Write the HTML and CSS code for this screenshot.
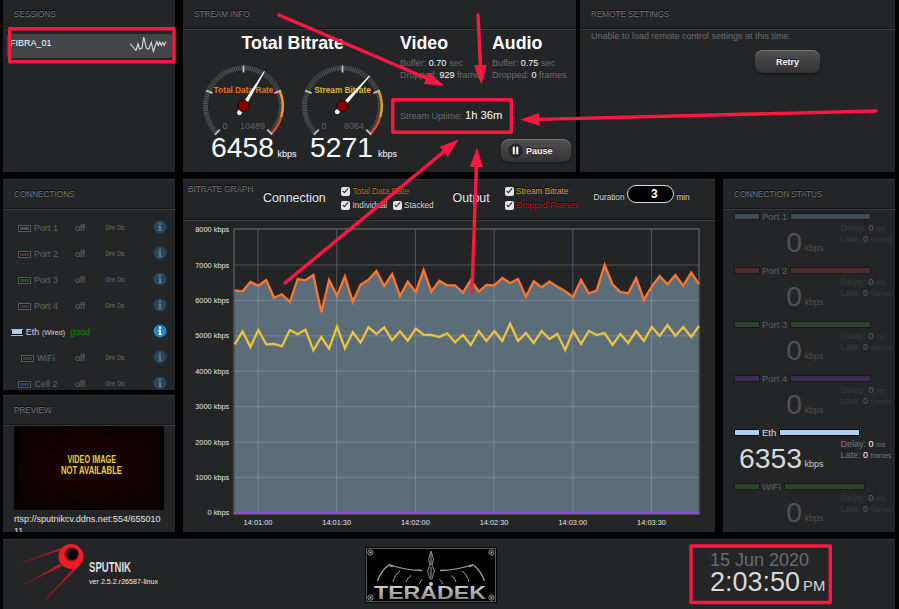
FILE: index.html
```
<!DOCTYPE html>
<html lang="en">
<head>
<meta charset="utf-8">
<title>Sputnik</title>
<link rel="stylesheet" href="styles.css">
</head>
<body>
<div class="app">
  <section class="panel sessions">
    <h3>SESSIONS</h3>
    <div class="session"><span>FIBRA_01</span>
      <svg width="40" height="18" viewBox="129 36 40 18"><path d="M130 43.500l6 7 2-6.500 1.500 5 2.500-1 1.800-11 2.500 11 2.500 1 2.500-6.500 2 9 3.500-10 1.500 4 1.500-3.500 1.500 3.500 1.500-3 1.500 3 1.500-4" fill="none" stroke="#dcdddd" stroke-width="1.100"/><circle cx="166.400" cy="44.500" r="1.200" fill="#f00"/></svg>
    </div>
  </section>

  <section class="panel stream">
    <h3>STREAM INFO</h3>
    <div class="stream-body">
      <div class="bitrate">
        <h2>Total Bitrate</h2>
        <div class="gauges">
          <div class="gauge" id="g1">
            <svg width="99" height="79" viewBox="-49.5 -52 99 79">
              <g class="dial"></g>
              <text class="gname orange" x="0" y="-13">Total Data Rate</text>
              <text class="gnum" x="-18.500" y="23">0</text><text class="gnum" x="9" y="23">10489</text>
              <g transform="rotate(31.2)"><path class="needle" d="M-.5-40.500H.5L2.300 9 0 10.500-2.300 9z"/></g>
              <circle r="5.700" class="hub"/>
            </svg>
            <p class="big">6458<small>kbps</small></p>
          </div>
          <div class="gauge" id="g2">
            <svg width="99" height="79" viewBox="-49.5 -52 99 79">
              <g class="dial"></g>
              <text class="gname gold" x="0" y="-13">Stream Bitrate</text>
              <text class="gnum" x="-18.500" y="23">0</text><text class="gnum" x="11.500" y="23">8064</text>
              <g transform="rotate(42)"><path class="needle" d="M-.5-40.500H.5L2.300 9 0 10.500-2.300 9z"/></g>
              <circle r="5.700" class="hub"/>
            </svg>
            <p class="big second">5271<small>kbps</small></p>
          </div>
        </div>
      </div>
      <div class="av">
        <div class="av-cols">
          <div><h2>Video</h2><p>Buffer: <b>0.70</b> sec</p><p>Dropped: <b>929</b> frames</p></div>
          <div><h2>Audio</h2><p>Buffer: <b>0.75</b> sec</p><p>Dropped: <b>0</b> frames</p></div>
        </div>
        <p class="uptime">Stream Uptime: <b>1h 36m</b></p>
        <button class="btn pause"><svg width="15" height="15"><circle cx="7.500" cy="7.500" r="6.500" fill="#292a2b" stroke="#191919"/><path d="M4.800 3.800h2v7.400h-2zM8.200 3.800h2v7.400h-2z" fill="#fff"/></svg>Pause</button>
      </div>
    </div>
  </section>

  <section class="panel remote">
    <h3>REMOTE SETTINGS</h3>
    <p>Unable to load remote control settings at this time.</p>
    <button class="btn retry">Retry</button>
  </section>

  <section class="panel connections">
    <h3>CONNECTIONS</h3>
    <div class="rows" id="rows"></div>
  </section>

  <section class="panel preview">
    <h3>PREVIEW</h3>
    <svg class="video" width="150" height="84"><defs><radialGradient id="vg"><stop offset="0" stop-color="#210202"/><stop offset="1" stop-color="#0c0001"/></radialGradient></defs>
      <rect width="150" height="84" fill="#050000"/><rect x="4" width="142" height="83" fill="url(#vg)"/>
      <g font-family="Liberation Sans" font-weight="bold" font-size="10.500" fill="#e3d341"><text x="53.500" y="37.300" textLength="48.500" lengthAdjust="spacingAndGlyphs">VIDEO IMAGE</text><text x="47" y="47.800" textLength="61" lengthAdjust="spacingAndGlyphs">NOT AVAILABLE</text></g>
    </svg>
    <p>rtsp://sputnikcv.ddns.net:554/65501011</p>
  </section>

  <section class="panel graph">
    <header>
      <span class="gtitle">BITRATE GRAPH</span>
      <span class="group">Connection</span>
      <div class="checks conn"><div><label class="orange2"><i></i>Total Data Rate</label></div><div><label><i></i>Individual</label><label><i></i>Stacked</label></div></div>
      <span class="group out">Output</span>
      <div class="checks outp"><div><label class="gold"><i></i>Stream Bitrate</label></div><div><label class="red"><i></i>Dropped Frames</label></div></div>
      <div class="duration">Duration<span class="input">3</span>min</div>
    </header>
    <svg id="chart" width="532" height="311" viewBox="183 221 532 311"></svg>
  </section>

  <section class="panel status">
    <h3>CONNECTION STATUS</h3>
    <div id="status"></div>
  </section>

  <footer class="panel foot">
    <div class="brand">
      <svg width="66" height="66" viewBox="20 541 66 66">
        <defs><linearGradient id="ray" x1="0" y1="1" x2="1" y2="0"><stop offset="0" stop-color="#c01520" stop-opacity=".2"/><stop offset="1" stop-color="#e01b26"/></linearGradient></defs>
        <path d="M64 547L21 563 66 548.500z" stroke="#c01520" stroke-width=".3" fill="url(#ray)"/><path d="M60 564L25 584 62 566z" stroke="#c01520" stroke-width=".3" fill="url(#ray)"/><path d="M78 567L46 599 75 567z" stroke="#c01520" stroke-width=".6" fill="url(#ray)"/>
        <circle cx="71" cy="556.500" r="12.500" fill="#ee1c27"/><circle cx="71.500" cy="554.500" r="7.300" fill="#a8101a"/><circle cx="72.300" cy="554" r="6" fill="#050505"/><circle cx="69" cy="551.500" r="1" fill="#77262b"/>
      </svg>
      <div><svg class="word" width="44" height="14"><text x="0" y="12" textLength="42" lengthAdjust="spacingAndGlyphs">SPUTNIK</text></svg><p>ver 2.5.2.r26587-linux</p></div>
    </div>
    <svg class="teradek" width="132" height="56" viewBox="365 547 132 56">
      <defs><linearGradient id="metal" x1="0" y1="0" x2="0" y2="1"><stop offset="0" stop-color="#ddd"/><stop offset="1" stop-color="#777"/></linearGradient></defs>
      <rect x="365" y="547" width="132" height="56" fill="#050505"/><rect x="366.500" y="548.500" width="129" height="53" fill="#000" stroke="#5c5c5c"/>
      <g fill="#222" stroke="#8b8b8b" stroke-width=".9"><circle cx="370.500" cy="552.500" r="2.700"/><circle cx="491.500" cy="552.500" r="2.700"/><circle cx="370.500" cy="597.500" r="2.700"/><circle cx="491.500" cy="597.500" r="2.700"/></g>
      <g fill="#bbb"><circle cx="370.500" cy="552.500" r="1"/><circle cx="491.500" cy="552.500" r="1"/><circle cx="370.500" cy="597.500" r="1"/><circle cx="491.500" cy="597.500" r="1"/></g>
      <g id="wing" fill="none" stroke="#a4a4a4" stroke-width="1.300"><path d="M377.500 581Q381 571 388 565.500M388.500 564.500Q404 570 422 570.500" /><path d="M393 582Q395 574 400 571M406 582Q407 578 411 575.500M419.500 584Q420 581 422.500 579.500" stroke-width="1"/><path d="M388.500 565L393 566.300" stroke-width="1.800"/></g>
      <use href="#wing" transform="matrix(-1 0 0 1 862 0)"/>
      <path d="M431 551l2.500 8-1.500 6 2.500 6-2.500 8h-2l-2.500-8 2.500-6-1.500-6zM431 553v12M431 567v11" fill="#111" stroke="#999" stroke-width=".9"/>
      <text x="374" y="599" font-family="Liberation Sans" font-weight="bold" font-size="18" fill="url(#metal)" textLength="112" lengthAdjust="spacingAndGlyphs">TERADEK</text>
      <circle cx="431" cy="584" r="2" fill="#ccc"/>
    </svg>
    <div class="clock"><p class="date">15 Jun 2020</p><p class="time">2:03:50<small>PM</small></p></div>
  </footer>
</div>

<svg class="marks" width="899" height="609">
  <defs><marker id="head" markerUnits="userSpaceOnUse" markerWidth="20" markerHeight="14" refX="1" refY="6.500" orient="auto"><path d="M0 0L19.500 6.500 0 13z" fill="#ff1744"/></marker></defs>
  <g fill="none" stroke="#ff1744" stroke-width="3.400" stroke-linecap="round">
    <rect x="9.700" y="28.700" width="164.300" height="33" stroke-linejoin="round"/>
    <rect x="392.800" y="99.800" width="118.500" height="32.400" stroke-linejoin="round"/>
    <rect x="691" y="546" width="139.300" height="56.500" stroke-linejoin="round"/>
    <path d="M279 15L427.200 78.500" marker-end="url(#head)"/>
    <path d="M478 15L480.500 66" marker-end="url(#head)"/>
    <path d="M876 111L538.500 119.400" marker-end="url(#head)"/>
    <path d="M285 283L444.400 151.300" marker-end="url(#head)"/>
    <path d="M472 292L476.400 166" marker-end="url(#head)"/>
  </g>
</svg>
<script src="app.js"></script>
</body>
</html>
```

FILE: styles.css
```
* { box-sizing: border-box; margin: 0; padding: 0; }
body { background: #020202; color: #ddd; font-family: "Liberation Sans", Arial, sans-serif; font-size: 9px; width: 899px; height: 609px; overflow: hidden; position: relative; }
.app { display: grid; padding-left: 3px; width: 899px; height: 609px;
  grid-template-columns: 172px 8px 393px 4px 135px 4px 4px 172px;
  grid-template-rows: 172px 7px 211px 5px 136px 8px 70px; }
.panel { background: #242527; overflow: hidden; border-top: 1px solid #323335; min-width: 0; }
.sessions { grid-area: 1 / 1; border-top: 0; }
.stream { grid-area: 1 / 3; border-top: 0; }
.remote { grid-area: 1 / 5 / 2 / 9; border-top: 0; }
.connections { grid-area: 3 / 1; }
.preview { grid-area: 5 / 1 / 6 / 2; height: 137px; }
.graph { grid-area: 3 / 3 / 6 / 6; height: 353px; }
.status { grid-area: 3 / 8 / 6 / 9; height: 353px; }
.foot { grid-area: 7 / 1 / 8 / 9; }

h3 { font-size: 8.2px; font-weight: normal; color: #77797b; height: 30px; line-height: 30px; padding-left: 11px; border-bottom: 1px solid #3a3b3d; box-shadow: inset 0 -1px #141516; text-shadow: 0 -1px #000; white-space: nowrap; }
.sessions h3, .stream h3, .remote h3 { line-height: 29px; }
h2 { font-size: 17.800px; line-height: 22px; color: #fff; }
p { white-space: nowrap; }

.session { display: flex; justify-content: space-between; margin: 4px 3px 0 4px; height: 24px; border-radius: 3px; background: #434648; color: #fff; line-height: 19px; padding-left: 3px; }
.session svg { margin: 2px 3px 0 0; }

.stream-body { display: flex; padding-top: 2px; }
.bitrate { width: 217px; padding-left: 10.500px; }
.bitrate h2 { padding-left: 48px; }
.gauges { display: flex; }
.gauge { width: 99px; }
.gauge svg { display: block; overflow: visible; }
.gname { font-size: 8.300px; font-weight: bold; text-anchor: middle; }
.gnum { font-size: 9px; fill: #626466; text-anchor: middle; }
.needle { fill: #fff; }
.hub { fill: #800000; stroke: #2a0000; }
.big { font-size: 28.300px; line-height: 29px; color: #fff; padding-left: 17.500px; }
.big small { font-size: 9px; margin-left: 3.500px; }
.big.second small { margin-left: 5px; }
.av { color: #6a6c6e; }
.av-cols { display: grid; grid-template-columns: 92px 80px; }
.av h2 { margin-bottom: 3px; }
.av p { line-height: 12px; }
.av b { color: #fff; font-weight: normal; }
.av .uptime { line-height: 20px; margin-top: 24px; }
.uptime b { font-size: 11.200px; }
.btn { font: bold 9px "Liberation Sans", sans-serif; color: #fff; text-shadow: 0 -1px #000; border: 0; border-radius: 8px; background: linear-gradient(#515151, #333); box-shadow: inset 0 1px #777, 0 1px 2px #111; display: flex; align-items: center; justify-content: center; height: 23px; }
.pause { width: 70px; margin: 13px 0 0 101px; gap: 3px; justify-content: flex-end; padding-right: 18.500px; }
.remote p { padding-left: 11px; line-height: 12px; color: #6a6c6e; }
.retry { width: 65px; margin: 8px 0 0 175px; }

.rows { padding-top: 5px; }
.row { display: grid; grid-template-columns: 60px 24px 46px 1fr; height: 26px; align-items: center; padding-left: 5px; text-align: center; white-space: nowrap; }
.row > * { opacity: .36; }
.row.on > * { opacity: 1; }
.row .name { display: flex; justify-content: center; align-items: center; gap: 3px; color: #d5d5d5; }
.row .name small { font-size: 7.100px; }
.row .chip { width: 13px; height: 7px; border: 1px solid #bbb; background: #000; padding: 1px; }
.row .chip i { display: block; height: 3px; background: var(--c); }
.row.on .chip { border-width: 1px 0; width: 12px; padding: 0 1px; }
.row.on .chip i { height: 4px; margin-top: .5px; }
.row .time { font-size: 7.100px; }
.row.on .state { color: #0a8a0a; margin: 0 -5px; }
.row svg { margin-left: 15px; margin-top: -2px; }

.video { display: block; margin: 0 0 0 11px; }
.preview p { white-space: normal; word-break: break-all; width: 150px; margin: 3px 0 0 11px; line-height: 12px; color: #e4e4e4; }

.graph header { display: flex; height: 41px; border-bottom: 1px solid #3a3b3d; box-shadow: inset 0 -1px #141516; text-shadow: 0 -1px #000; font-size: 8.200px; white-space: nowrap; }
.gtitle { color: #77797b; width: 75px; padding-left: 5px; line-height: 19px; }
.group { font-size: 12.400px; line-height: 36px; color: #eee; padding-left: 5px; width: 83px; }
.group.out { width: 52px; padding-left: 0; }
.checks { padding-top: 4px; }
.checks div { display: flex; height: 14px; align-items: center; gap: 5.500px; }
.conn { width: 111.500px; }
.outp { width: 89px; }
.checks label { display: flex; align-items: center; gap: 2.500px; }
.checks i { width: 9px; height: 9px; background: #e4e4e4; border-radius: 2px; position: relative; }
.checks i::after { content: ""; position: absolute; left: 3px; top: .5px; width: 2px; height: 4.500px; border: solid #222; border-width: 0 1.500px 1.500px 0; transform: rotate(42deg); box-sizing: content-box; }
.orange { fill: #ef6a30; } .orange2 { color: #dd6026; }
.gold { fill: #dcb63e; color: #d2ab35; } .red { color: #d00; }
.duration { display: flex; align-items: flex-start; line-height: 35px; gap: 2px; }
.input { width: 47px; height: 18px; margin: 5px 0 0 1px; border: 1px solid #ddd; border-radius: 9px; background: #000; color: #fff; font-weight: bold; font-size: 12px; line-height: 16px; text-align: center; padding-left: 7px; }
#chart { display: block; }
#chart text { font-size: 7.400px; fill: #e4e4e4; }

.link { height: 54px; padding-left: 11px; }
.link > * { opacity: .25; }
.link > .bars { opacity: .31; }
.link.on > * { opacity: 1; }
.bars { display: flex; align-items: center; line-height: 13px; height: 13px; font-size: 9.500px; gap: 2px; color: #ddd; }
.bars i { height: 7px; border: 1px solid #000; background: var(--c); width: 26px; }
.bars i:last-child { width: 81px; margin-left: 1px; }
.meter { display: flex; height: 41px; }
.meter .rate { width: 68px; font-size: 28.300px; line-height: 39px; text-align: right; color: #d8d8d8; }
.meter .unit { width: 38.500px; padding: 17px 0 0 2.500px; line-height: 16px; color: #ccc; }
.meter .info { line-height: 11px; color: #77797b; white-space: nowrap; }
.info b { font-weight: normal; color: #fff; }
.info small { font-size: 6.800px; }

.foot { display: flex; }
.brand { display: flex; width: 363px; padding-left: 17px; font-size: 7.150px; }
.brand > div { padding: 20px 0 0 3px; color: #eee; }
.brand svg { margin-top: 1px; }
.brand .word { display: block; margin: 0; overflow: visible; }
.word text { font-size: 15px; font-weight: bold; fill: #ddd; }
.brand p { line-height: 12px; margin-top: 2px; }
.teradek { margin: 7px 0 0 -1px; }
.clock { margin-left: 213px; white-space: nowrap; }
.date { font-size: 18px; line-height: 20px; color: #6a6c6e; margin-top: 10px; }
.clock .time { font-size: 27px; line-height: 26px; color: #d8d8d8; margin-top: -1px; }
.clock small { font-size: 14.800px; margin-left: 3px; }
.marks { position: absolute; left: 0; top: 0; }
```

FILE: app.js
```
// Gauge dials: fine ticks, five major ticks and the warning ranges
const pt = (r, deg) => { const a = deg * Math.PI / 180; return (r * Math.sin(a)).toFixed(2) + ' ' + (-r * Math.cos(a)).toFixed(2); };
let dial = '', fine = '';
for (let i = 0; i <= 100; i++) { const a = -135 + i * 2.7; fine += `M${pt(35.5, a)}L${pt(40.5, a)}`; }
dial += `<path d="${fine}" stroke="#66686a" stroke-width=".8"/>`;
dial += `<path d="M${pt(39.3, 67.5)}A39.300 39.300 0 0 1 ${pt(39.3, 107)}" fill="none" stroke="#f29a18" stroke-width="2.400"/>`;
dial += `<path d="M${pt(39.3, 107)}A39.300 39.300 0 0 1 ${pt(39.3, 135)}" fill="none" stroke="#dc4a25" stroke-width="2.400"/>`;
for (let i = 0; i < 5; i++) { const a = -135 + i * 67.5; dial += `<path d="M${pt(33.5, a)}L${pt(40.5, a)}" stroke="#c4c6c8" stroke-width="1.800"/>`; }
document.querySelectorAll('.dial').forEach(g => g.innerHTML = dial);

const conns = [['Port 1', '#7fa4b8'], ['Port 2', '#a84040'], ['Port 3', '#3f8a3f'], ['Port 4', '#7540b8'], ['Eth', '#a9d3f5'], ['WiFi', '#3f8a3f'], ['Cell 2', '#3a6cd0']];
document.getElementById('rows').innerHTML = conns.map(([n, c]) => {
  const on = n === 'Eth';
  return `<div class="row${on ? ' on' : ''}" style="--c:${c}"><span class="name"><span class="chip"><i></i></span><span>${n}${on ? ' <small>(Wired)</small>' : ''}</span></span><span class="state">${on ? 'good' : 'off'}</span><span class="time">${on ? '' : '0m 0s'}</span><svg width="14" height="14"><circle cx="7" cy="7" r="6.500" fill="#2487c4"/><path d="M6 2.700h2v2H6zM5 5.700h3v4.300h1v1H5.200v-1H6V6.700H5z" fill="#fff"/></svg></div>`;
}).join('');

document.getElementById('status').innerHTML = conns.slice(0, 6).map(([n, c]) => {
  const on = n === 'Eth';
  return `<div class="link${on ? ' on' : ''}" style="--c:${c}"><div class="bars"><i></i><span>${n}</span><i></i></div><div class="meter"><span class="rate">${on ? 6353 : 0}</span><span class="unit">kbps</span><div class="info">Delay: <b>0</b> <small>ms</small><br>Late: <b>0</b> <small>frames</small></div></div></div>`;
}).join('');

// Bitrate chart
const totalA = [121,124,96,107,90,143,133,156,87,91,75,187,90,137,79,155,104,89,63,108,72,138,95,127,60,125].map(v => 250 + v / 3);
const totalB = [317,331,331,353,315,350,330,331,309,324,312,365,319,337,320,335,349,366,315,355,347,270,328,351,355,309,374,334,303,328,300,332,293,327].map(v => 175 + v / 3);
const stream = [283,244,291,240,283,282,289,240,253,239,301,261,296,230,295,247,278,232,252,232,271,244,272,236,254,255,261,250,277,255].map(v => 250 + v / 3)
  .concat([345,331,341,331,341,323.5,341,333,343,331,339,334,350,331,344,331,335,333,345,334,343,331,341,327,336,325,336,327,337,326]);
const line = a => a.map((y, i) => (234.7 + i * 7.87).toFixed(1) + ' ' + y.toFixed(1)).join('L');
const total = totalA.concat(totalB);
let s = `<rect x="234" y="229" width="465" height="285" fill="#232426"/><path d="M${line(total)}L699 513L234.700 513z" fill="#5c6d7a"/>`;
for (let k = 0; k <= 8; k++) {
  const y = 512.8 - k * 35.4;
  if (k && k < 8) s += `<path d="M234 ${y}H699" stroke="#b4bcc2" stroke-opacity=".33"/>`;
  s += `<text x="229.300" y="${(y + 2.500).toFixed(1)}" text-anchor="end">${k * 1000} kbps</text>`;
}
['14:01:00', '14:01:30', '14:02:00', '14:02:30', '14:03:00', '14:03:30'].forEach((t, i) => {
  const x = 258 + i * 78.7;
  s += `<path d="M${x} 229V513" stroke="#b4bcc2" stroke-opacity=".33"/><text x="${x}" y="524.800" text-anchor="middle">${t}</text>`;
});
s += `<rect x="234" y="229" width="465" height="285" fill="none" stroke="#58595b" stroke-width="1.500"/>`;
s += `<path d="M${line(total)}" fill="none" stroke="#ff7630" stroke-width="2.300"/><path d="M${line(stream)}" fill="none" stroke="#edc340" stroke-width="2.300"/><path d="M234 513H699" stroke="#8850d8" stroke-width="1.800"/>`;
document.getElementById('chart').innerHTML = s;
```
